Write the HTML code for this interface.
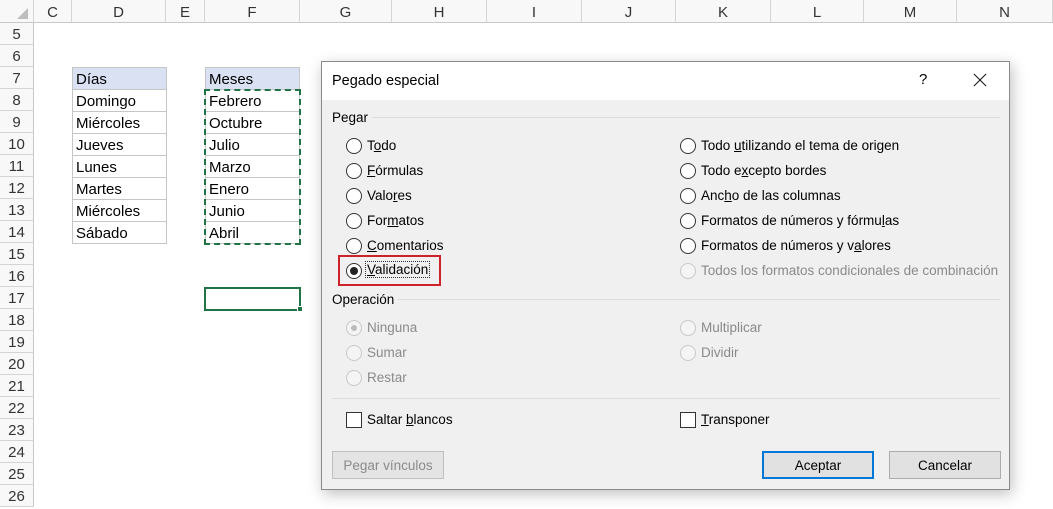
<!DOCTYPE html>
<html><head><meta charset="utf-8"><style>
body{margin:0;width:1053px;height:508px;overflow:hidden;background:#fff;font-family:"Liberation Sans",sans-serif;position:relative}
.a{position:absolute}
.ch{position:absolute;top:0;height:23px;border-right:1px solid #d4d4d4;border-bottom:1px solid #c8c8c8;background:#f8f8f8;text-align:center;line-height:25px;font-size:15px;color:#333;box-sizing:border-box}
.rh{position:absolute;left:0;width:34px;height:22px;border-right:1px solid #c8c8c8;border-bottom:1px solid #d4d4d4;background:#f8f8f8;text-align:center;line-height:24px;font-size:15px;color:#333;box-sizing:border-box}
.c{position:absolute;height:23px;border:1px solid #c6c6c6;box-sizing:border-box;font-size:15px;line-height:23px;padding-left:3px;color:#000}
.dlg{position:absolute;left:321px;top:61px;width:689px;height:429px;background:#f0f0f0;border:1px solid #8a8a8a;box-sizing:border-box;box-shadow:2px 4px 14px rgba(0,0,0,.25);font-size:13.5px;color:#000}
.r{position:absolute;width:14px;height:14px;border:1px solid #333;border-radius:50%;background:#fff}
.r.d{border-color:#c8c8c8;background:#f4f4f4}
.t{position:absolute;font-size:13.5px;white-space:nowrap}
.g{color:#8a8a8a}
.sep{position:absolute;height:1px;background:#dcdcdc}
.cb{position:absolute;width:14px;height:14px;border:1px solid #333;background:#fff}
.btn{position:absolute;height:28px;border:1px solid #adadad;background:#e1e1e1;box-sizing:border-box;text-align:center;line-height:27px;font-size:13.5px}
u{text-decoration:underline}
</style></head><body>
<div class="ch" style="left:0;width:34px"><svg width="12" height="12" style="position:absolute;left:17px;top:8px"><polygon points="11,0 11,11 0,11" fill="#bdbdbd"/></svg></div>
<div class="ch" style="left:34px;width:38px">C</div>
<div class="ch" style="left:72px;width:94px">D</div>
<div class="ch" style="left:166px;width:39px">E</div>
<div class="ch" style="left:205px;width:95px">F</div>
<div class="ch" style="left:300px;width:92px">G</div>
<div class="ch" style="left:392px;width:95px">H</div>
<div class="ch" style="left:487px;width:95px">I</div>
<div class="ch" style="left:582px;width:94px">J</div>
<div class="ch" style="left:676px;width:95px">K</div>
<div class="ch" style="left:771px;width:93px">L</div>
<div class="ch" style="left:864px;width:93px">M</div>
<div class="ch" style="left:957px;width:96px">N</div>
<div class="rh" style="top:23px">5</div><div class="rh" style="top:45px">6</div><div class="rh" style="top:67px">7</div><div class="rh" style="top:89px">8</div><div class="rh" style="top:111px">9</div><div class="rh" style="top:133px">10</div><div class="rh" style="top:155px">11</div><div class="rh" style="top:177px">12</div><div class="rh" style="top:199px">13</div><div class="rh" style="top:221px">14</div><div class="rh" style="top:243px">15</div><div class="rh" style="top:265px">16</div><div class="rh" style="top:287px">17</div><div class="rh" style="top:309px">18</div><div class="rh" style="top:331px">19</div><div class="rh" style="top:353px">20</div><div class="rh" style="top:375px">21</div><div class="rh" style="top:397px">22</div><div class="rh" style="top:419px">23</div><div class="rh" style="top:441px">24</div><div class="rh" style="top:463px">25</div><div class="rh" style="top:485px">26</div>

<div class="c" style="left:72px;top:67px;width:95px;background:#d9e1f2">Días</div>
<div class="c" style="left:72px;top:89px;width:95px">Domingo</div>
<div class="c" style="left:72px;top:111px;width:95px">Miércoles</div>
<div class="c" style="left:72px;top:133px;width:95px">Jueves</div>
<div class="c" style="left:72px;top:155px;width:95px">Lunes</div>
<div class="c" style="left:72px;top:177px;width:95px">Martes</div>
<div class="c" style="left:72px;top:199px;width:95px">Miércoles</div>
<div class="c" style="left:72px;top:221px;width:95px">Sábado</div>

<div class="c" style="left:205px;top:67px;width:95px;background:#d9e1f2">Meses</div>
<div class="c" style="left:205px;top:89px;width:95px">Febrero</div>
<div class="c" style="left:205px;top:111px;width:95px">Octubre</div>
<div class="c" style="left:205px;top:133px;width:95px">Julio</div>
<div class="c" style="left:205px;top:155px;width:95px">Marzo</div>
<div class="c" style="left:205px;top:177px;width:95px">Enero</div>
<div class="c" style="left:205px;top:199px;width:95px">Junio</div>
<div class="c" style="left:205px;top:221px;width:95px">Abril</div>
<div class="a" style="left:204px;top:89px;width:93px;height:152px;border:2px dashed #217346"></div>
<div class="a" style="left:204px;top:287px;width:93px;height:20px;border:2px solid #217346"></div>
<div class="a" style="left:297px;top:306px;width:4px;height:4px;background:#217346;border:1px solid #fff"></div>

<div class="dlg">
<div class="a" style="left:0;top:0;width:687px;height:38px;background:#fff"></div>
<div class="t" style="left:10px;top:11px;font-size:14.5px">Pegado especial</div>
<div class="t" style="left:597px;top:9px;font-size:15px">?</div>
<svg class="a" style="left:651px;top:11px" width="14" height="14"><path d="M1 1L13 13M13 1L1 13" stroke="#222" stroke-width="1.2"/></svg>

<div class="t" style="left:10px;top:48px">Pegar</div><div class="sep" style="left:50px;top:55px;width:628px"></div>
<div class="r" style="left:24px;top:76px"></div><div class="t" style="left:45px;top:76px">T<u>o</u>do</div>
<div class="r" style="left:24px;top:101px"></div><div class="t" style="left:45px;top:101px"><u>F</u>órmulas</div>
<div class="r" style="left:24px;top:126px"></div><div class="t" style="left:45px;top:126px">Valo<u>r</u>es</div>
<div class="r" style="left:24px;top:151px"></div><div class="t" style="left:45px;top:151px">For<u>m</u>atos</div>
<div class="r" style="left:24px;top:176px"></div><div class="t" style="left:45px;top:176px"><u>C</u>omentarios</div>
<div class="r" style="left:24px;top:201px"></div><div class="a" style="left:28px;top:205px;width:8px;height:8px;border-radius:50%;background:#222"></div>
<div class="t" style="left:44px;top:200px;padding:0 1px;outline:1px dotted #333"><u>V</u>alidación</div>
<div class="a" style="left:16px;top:193px;width:103px;height:31px;border:2px solid #d0202a;box-sizing:border-box"></div>

<div class="r" style="left:358px;top:76px"></div><div class="t" style="left:379px;top:76px">Todo <u>u</u>tilizando el tema de origen</div>
<div class="r" style="left:358px;top:101px"></div><div class="t" style="left:379px;top:101px">Todo e<u>x</u>cepto bordes</div>
<div class="r" style="left:358px;top:126px"></div><div class="t" style="left:379px;top:126px">Anc<u>h</u>o de las columnas</div>
<div class="r" style="left:358px;top:151px"></div><div class="t" style="left:379px;top:151px">Formatos de números y fórmu<u>l</u>as</div>
<div class="r" style="left:358px;top:176px"></div><div class="t" style="left:379px;top:176px">Formatos de números y v<u>a</u>lores</div>
<div class="r d" style="left:358px;top:201px"></div><div class="t g" style="left:379px;top:201px">Todos los formatos condicionales de combinación</div>

<div class="t" style="left:10px;top:230px">Operación</div><div class="sep" style="left:76px;top:237px;width:602px"></div>
<div class="r d" style="left:24px;top:258px"></div><div class="a" style="left:29px;top:263px;width:6px;height:6px;border-radius:50%;background:#bbb"></div><div class="t g" style="left:45px;top:258px">Ninguna</div>
<div class="r d" style="left:24px;top:283px"></div><div class="t g" style="left:45px;top:283px">Sumar</div>
<div class="r d" style="left:24px;top:308px"></div><div class="t g" style="left:45px;top:308px">Restar</div>
<div class="r d" style="left:358px;top:258px"></div><div class="t g" style="left:379px;top:258px">Multiplicar</div>
<div class="r d" style="left:358px;top:283px"></div><div class="t g" style="left:379px;top:283px">Dividir</div>

<div class="sep" style="left:10px;top:336px;width:668px"></div>
<div class="cb" style="left:24px;top:350px"></div><div class="t" style="left:45px;top:350px">Saltar <u>b</u>lancos</div>
<div class="cb" style="left:358px;top:350px"></div><div class="t" style="left:379px;top:350px"><u>T</u>ransponer</div>

<div class="btn" style="left:10px;top:389px;width:112px;border-color:#bfbfbf;background:#e4e4e4;color:#8a8a8a">Pegar vínculos</div>
<div class="btn" style="left:440px;top:389px;width:112px;border:2px solid #0078d7;line-height:25px">Aceptar</div>
<div class="btn" style="left:567px;top:389px;width:112px">Cancelar</div>
</div>
</body></html>
